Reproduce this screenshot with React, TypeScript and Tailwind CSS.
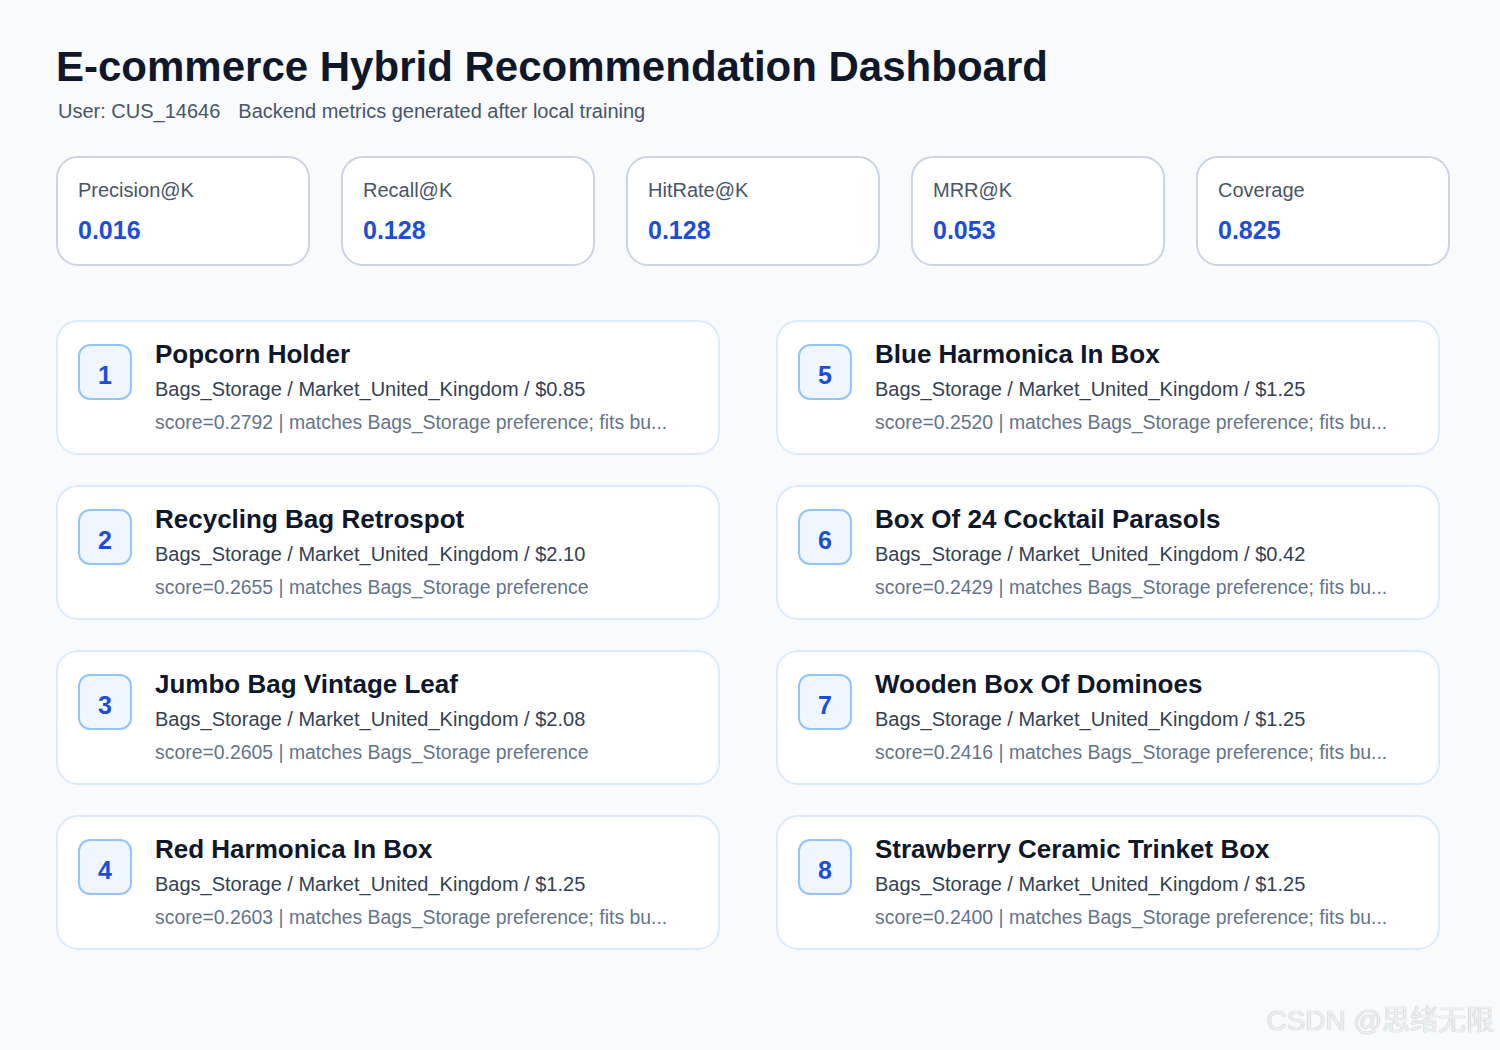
const metrics = [
  { label: "Precision@K", value: "0.016" },
  { label: "Recall@K", value: "0.128" },
  { label: "HitRate@K", value: "0.128" },
  { label: "MRR@K", value: "0.053" },
  { label: "Coverage", value: "0.825" },
];

const recs = [
  { rank: 1, name: "Popcorn Holder", price: "$0.85", score: "0.2792", reason: "matches Bags_Storage preference; fits bu..." },
  { rank: 2, name: "Recycling Bag Retrospot", price: "$2.10", score: "0.2655", reason: "matches Bags_Storage preference" },
  { rank: 3, name: "Jumbo Bag Vintage Leaf", price: "$2.08", score: "0.2605", reason: "matches Bags_Storage preference" },
  { rank: 4, name: "Red Harmonica In Box", price: "$1.25", score: "0.2603", reason: "matches Bags_Storage preference; fits bu..." },
  { rank: 5, name: "Blue Harmonica In Box", price: "$1.25", score: "0.2520", reason: "matches Bags_Storage preference; fits bu..." },
  { rank: 6, name: "Box Of 24 Cocktail Parasols", price: "$0.42", score: "0.2429", reason: "matches Bags_Storage preference; fits bu..." },
  { rank: 7, name: "Wooden Box Of Dominoes", price: "$1.25", score: "0.2416", reason: "matches Bags_Storage preference; fits bu..." },
  { rank: 8, name: "Strawberry Ceramic Trinket Box", price: "$1.25", score: "0.2400", reason: "matches Bags_Storage preference; fits bu..." },
];

function MetricCard({ label, value }: { label: string; value: string }) {
  return (
    <div className="h-[110px] rounded-[22px] border-2 border-[#cbd5e1] bg-white px-[20px] pt-[18px]">
      <div className="text-[20px] leading-[28px] text-[#475569]">{label}</div>
      <div className="mt-[11px] text-[25px] font-bold leading-[30px] text-[#1d4ed8]">{value}</div>
    </div>
  );
}

function RecCard({ rank, name, price, score, reason }: (typeof recs)[number]) {
  return (
    <div className="flex h-[135px] gap-[23px] rounded-[22px] border-2 border-[#dbeafe] bg-white pl-[20px] pt-[17px]">
      <div className="mt-[5px] flex h-[56px] w-[54px] shrink-0 items-center justify-center rounded-[12px] border-2 border-[#93c5fd] bg-[#eff6ff] pt-[8px] text-[25px] font-bold text-[#1d4ed8]">
        {rank}
      </div>
      <div className="min-w-0">
        <div className="text-[26px] font-bold leading-[30px] text-[#0f172a]">{name}</div>
        <div className="mt-[6px] text-[20px] leading-[28px] text-[#334155]">
          Bags_Storage / Market_United_Kingdom / {price}
        </div>
        <div className="mt-[5px] text-[19.4px] leading-[28px] text-[#64748b]">
          score={score} | {reason}
        </div>
      </div>
    </div>
  );
}

export default function App() {
  const left = recs.slice(0, 4);
  const right = recs.slice(4);
  return (
    <div
      className="relative min-h-[1050px] bg-[#f8fafc] pl-[56px] pr-[50px] pt-[42px]"
      style={{ fontFamily: '"Liberation Sans", Arial, "Noto Sans CJK SC", sans-serif' }}
    >
      <h1 className="text-[42px] font-bold leading-[50px] text-[#0f172a]">
        E-commerce Hybrid Recommendation Dashboard
      </h1>
      <div className="mt-[6px] flex gap-[18px] pl-[2px] text-[20px] leading-[26px] text-[#475569]">
        <span>User: CUS_14646</span>
        <span>Backend metrics generated after local training</span>
      </div>

      <div className="mt-[32px] grid grid-cols-5 gap-[31px]">
        {metrics.map((m) => (
          <MetricCard key={m.label} {...m} />
        ))}
      </div>

      <div className="mt-[54px] grid w-[1384px] grid-cols-2 gap-x-[56px]">
        <div className="flex flex-col gap-[30px]">
          {left.map((r) => (
            <RecCard key={r.rank} {...r} />
          ))}
        </div>
        <div className="flex flex-col gap-[30px]">
          {right.map((r) => (
            <RecCard key={r.rank} {...r} />
          ))}
        </div>
      </div>

      <div className="absolute bottom-[12px] right-[6px] text-[28px] leading-[34px] text-[#eeeff1] [text-shadow:0_0_1px_#9ca3af]">
        CSDN @思绪无限
      </div>
    </div>
  );
}
